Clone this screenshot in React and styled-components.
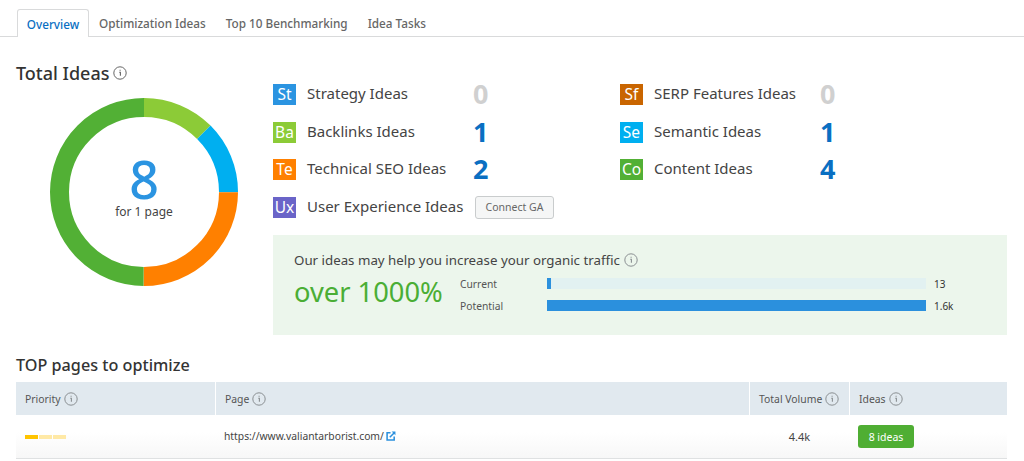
import React from "react";
import styled, { createGlobalStyle } from "styled-components";

const Global = createGlobalStyle`
  html, body { margin: 0; padding: 0; background: #fff; overflow: hidden; }
  body { font-family: "Noto Sans", "Open Sans", sans-serif; color: #333; width: 1024px; height: 461px; }
  * { box-sizing: border-box; }
`;
const Page = styled.div`width: 1024px; height: 461px; overflow: hidden; position: relative;`;
const Tabs = styled.div`display: flex; height: 37px; padding: 9px 0 0 17px; border-bottom: 1px solid #d9dadb;`;
const Tab = styled.div`
  height: 28px; padding: 0 10px; display: flex; align-items: center; font-size: 11.75px; font-weight: 500; white-space: nowrap;
  color: ${p => p.$active ? "#0a6fc2" : "#666"};
  ${p => p.$active && `background:#fff; border:1px solid #d9dadb; border-bottom:0; border-radius:3px 3px 0 0; margin-bottom:-1px; height:28px; width:72px; padding:0; justify-content:center;`}
`;
const Main = styled.div`display: flex; padding: 0 17px 0 16px; height: 298px;`;
const Left = styled.div`width: 257px; padding-top: 25px;`;
const Title = styled.h2`margin: 0; font-size: 18px; line-height: 22px; font-weight: 500; color: #333; display: flex; align-items: center; gap: 3px;`;
const Donut = styled.div`position: relative; width: 190px; height: 190px; margin: 13px 0 0 33px;`;
const Center = styled.div`position: absolute; inset: 0; display: flex; flex-direction: column; align-items: center; justify-content: center; padding-bottom: 8px;`;
const Big = styled.div`font-size: 52px; line-height: 48px; color: #2b94e1; font-weight: 500;`;
const Sub = styled.div`font-size: 12px; line-height: 18px; color: #444;`;
const Right = styled.div`flex: 1; padding-top: 47px;`;
const Grid = styled.div`display: grid; grid-template-columns: 347px 1fr; grid-auto-rows: 37.5px; height: 151px;`;
const Row = styled.div`display: flex; align-items: center; height: 21px;`;
const Badge = styled.div`
  width: 23px; height: 21px; background: ${p => p.$c}; color: #fff; font-size: 15.5px; padding-bottom: 1px;
  display: flex; align-items: center; justify-content: center; flex: none;
`;
const Label = styled.div`font-size: 15px; line-height: 20px; color: #444; margin-left: 11px; width: 168px; white-space: nowrap; padding-bottom: 3px;`;
const Num = styled.div`font-size: 27px; font-weight: 700; line-height: 21px; width: 14px; text-align: center; margin-left: -2px; padding-bottom: 2px; color: ${p => p.$zero ? "#d0d0d0" : "#0a6fc2"};`;
const Connect = styled.button`
  width: 79px; height: 23px; border: 1px solid #c9cccd; border-radius: 3px; background: #f5f6f6;
  font: 10.5px "Noto Sans", sans-serif; color: #666; padding: 0; flex: none;
`;
const Promo = styled.div`height: 100px; background: #ecf6ec; padding: 15px 20px 0 21px; width: 734px;`;
const PromoTitle = styled.div`font-size: 13.3px; line-height: 20px; color: #444; display: flex; align-items: center; gap: 4px;`;
const PromoBody = styled.div`display: flex; align-items: center; margin-top: 2px;`;
const Over = styled.div`font-size: 27.3px; line-height: 36px; color: #4aae35; width: 166px; white-space: nowrap; font-weight: 400;`;
const Bars = styled.div`display: flex; flex-direction: column; gap: 11px; padding-top: 6px;`;
const BarRow = styled.div`display: flex; align-items: center; height: 11px;`;
const BarName = styled.div`font-size: 10.3px; color: #555; width: 87px;`;
const Track = styled.div`width: 379px; height: 11px; background: #e2f1f1;`;
const Fill = styled.div`height: 100%; background: #2b90dd;`;
const BarVal = styled.div`font-size: 10px; color: #333; margin-left: 8px;`;
const Section = styled.div`padding: 0 17px 0 16px;`;
const H3 = styled.h3`margin: 0; font-size: 16.2px; line-height: 22px; font-weight: 500; color: #333; padding-top: 19px;`;
const Table = styled.div`margin-top: 6px; width: 991px;`;
const Cols = styled.div`display: grid; grid-template-columns: 200px 534px 100px 157px;`;
const Head = styled(Cols)`height: 33px; background: #e1e9ef;`;
const Th = styled.div`
  display: flex; align-items: center; gap: 3px; padding-left: 9px; font-size: 10.4px; color: #555;
  border-right: ${p => p.$last ? "0" : "1px solid #fff"};
`;
const Body = styled(Cols)`
  height: 44px; border-bottom: 1px solid #dfe1e2; align-items: center;
  background: linear-gradient(#fff 40%, #f7f7f7 100%);
`;
const Priority = styled.div`display: flex; gap: 1.5px; padding-left: 9px; margin-top: 1px;`;
const Seg = styled.div`width: 12.5px; height: 4px; background: ${p => p.$on ? "#ffc400" : "#ffe9a6"};`;
const Url = styled.div`font-size: 10.3px; color: #444; padding: 0 0 1px 8px; display: flex; align-items: center; gap: 2px;`;
const Vol = styled.div`font-size: 11px; color: #444; text-align: center; padding-right: 1px;`;
const IdeasBtn = styled.div`
  width: 56px; height: 23px; margin-left: 8px; background: #4fae33; border-radius: 3px; color: #fff;
  font-size: 10.5px; display: flex; align-items: center; justify-content: center;
`;

const Info = ({ s = 14, c = "#8a8f92" }) => (
  <svg width={s} height={s} viewBox="0 0 14 14" fill="none">
    <circle cx="7" cy="7" r="6.2" stroke={c} strokeWidth="1" />
    <path d="M6.2 6.2h1.2v3.6M7.1 3.7v1" stroke={c} strokeWidth="1.1" fill="none" />
  </svg>
);
const R = 84.5;
const C = 2 * Math.PI * R;
const segs = [
  { from: 0, to: 1, c: "#8ccb37" },
  { from: 1, to: 2, c: "#00aff0" },
  { from: 2, to: 4, c: "#ff8000" },
  { from: 4, to: 8, c: "#52b035" },
];
const Ring = () => (
  <svg width="190" height="190" viewBox="0 0 190 190">
    <g transform="rotate(-90 95 95)" fill="none" strokeWidth="19">
      {segs.map(s => (
        <circle key={s.c} cx="95" cy="95" r={R} stroke={s.c}
          strokeDasharray={`${(C * (s.to - s.from)) / 8} ${C}`}
          strokeDashoffset={-(C * s.from) / 8} />
      ))}
    </g>
  </svg>
);
const Ext = () => (
  <svg width="10" height="10" viewBox="0 0 11 11" fill="none">
    <path d="M5 2H1.2v7.8H9V6" stroke="#2b90dd" strokeWidth="1.7" />
    <path d="M4.2 6.8 9.4 1.6" stroke="#2b90dd" strokeWidth="1.7" />
    <path d="M6.2 0.6h4.2v4.2z" fill="#2b90dd" />
  </svg>
);
const Idea = ({ code, c, name, n }) => (
  <Row>
    <Badge $c={c}>{code}</Badge>
    <Label>{name}</Label>
    {n === undefined ? <Connect>Connect GA</Connect> : <Num $zero={n === 0}>{n}</Num>}
  </Row>
);

export default function App() {
  return (
    <Page>
      <Global />
      <Tabs>
        <Tab $active>Overview</Tab>
        <Tab>Optimization Ideas</Tab>
        <Tab>Top 10 Benchmarking</Tab>
        <Tab>Idea Tasks</Tab>
      </Tabs>
      <Main>
        <Left>
          <Title>Total Ideas <Info s={14} c="#666" /></Title>
          <Donut>
            <Ring />
            <Center>
              <Big>8</Big>
              <Sub>for 1 page</Sub>
            </Center>
          </Donut>
        </Left>
        <Right>
          <Grid>
            <Idea code="St" c="#2b94e1" name="Strategy Ideas" n={0} />
            <Idea code="Sf" c="#c96500" name="SERP Features Ideas" n={0} />
            <Idea code="Ba" c="#8ccb37" name="Backlinks Ideas" n={1} />
            <Idea code="Se" c="#00aff0" name="Semantic Ideas" n={1} />
            <Idea code="Te" c="#ff8000" name="Technical SEO Ideas" n={2} />
            <Idea code="Co" c="#52b035" name="Content Ideas" n={4} />
            <Idea code="Ux" c="#6a64c8" name="User Experience Ideas" />
          </Grid>
          <Promo>
            <PromoTitle>Our ideas may help you increase your organic traffic <Info /></PromoTitle>
            <PromoBody>
              <Over>over 1000%</Over>
              <Bars>
                <BarRow>
                  <BarName>Current</BarName>
                  <Track><Fill style={{ width: "1%" }} /></Track>
                  <BarVal>13</BarVal>
                </BarRow>
                <BarRow>
                  <BarName>Potential</BarName>
                  <Track><Fill style={{ width: "100%" }} /></Track>
                  <BarVal>1.6k</BarVal>
                </BarRow>
              </Bars>
            </PromoBody>
          </Promo>
        </Right>
      </Main>
      <Section>
        <H3>TOP pages to optimize</H3>
        <Table>
          <Head>
            <Th>Priority <Info /></Th>
            <Th>Page <Info /></Th>
            <Th>Total Volume <Info /></Th>
            <Th $last>Ideas <Info /></Th>
          </Head>
          <Body>
            <Priority><Seg $on /><Seg /><Seg /></Priority>
            <Url>https://www.valiantarborist.com/ <Ext /></Url>
            <Vol>4.4k</Vol>
            <IdeasBtn>8 ideas</IdeasBtn>
          </Body>
        </Table>
      </Section>
    </Page>
  );
}
